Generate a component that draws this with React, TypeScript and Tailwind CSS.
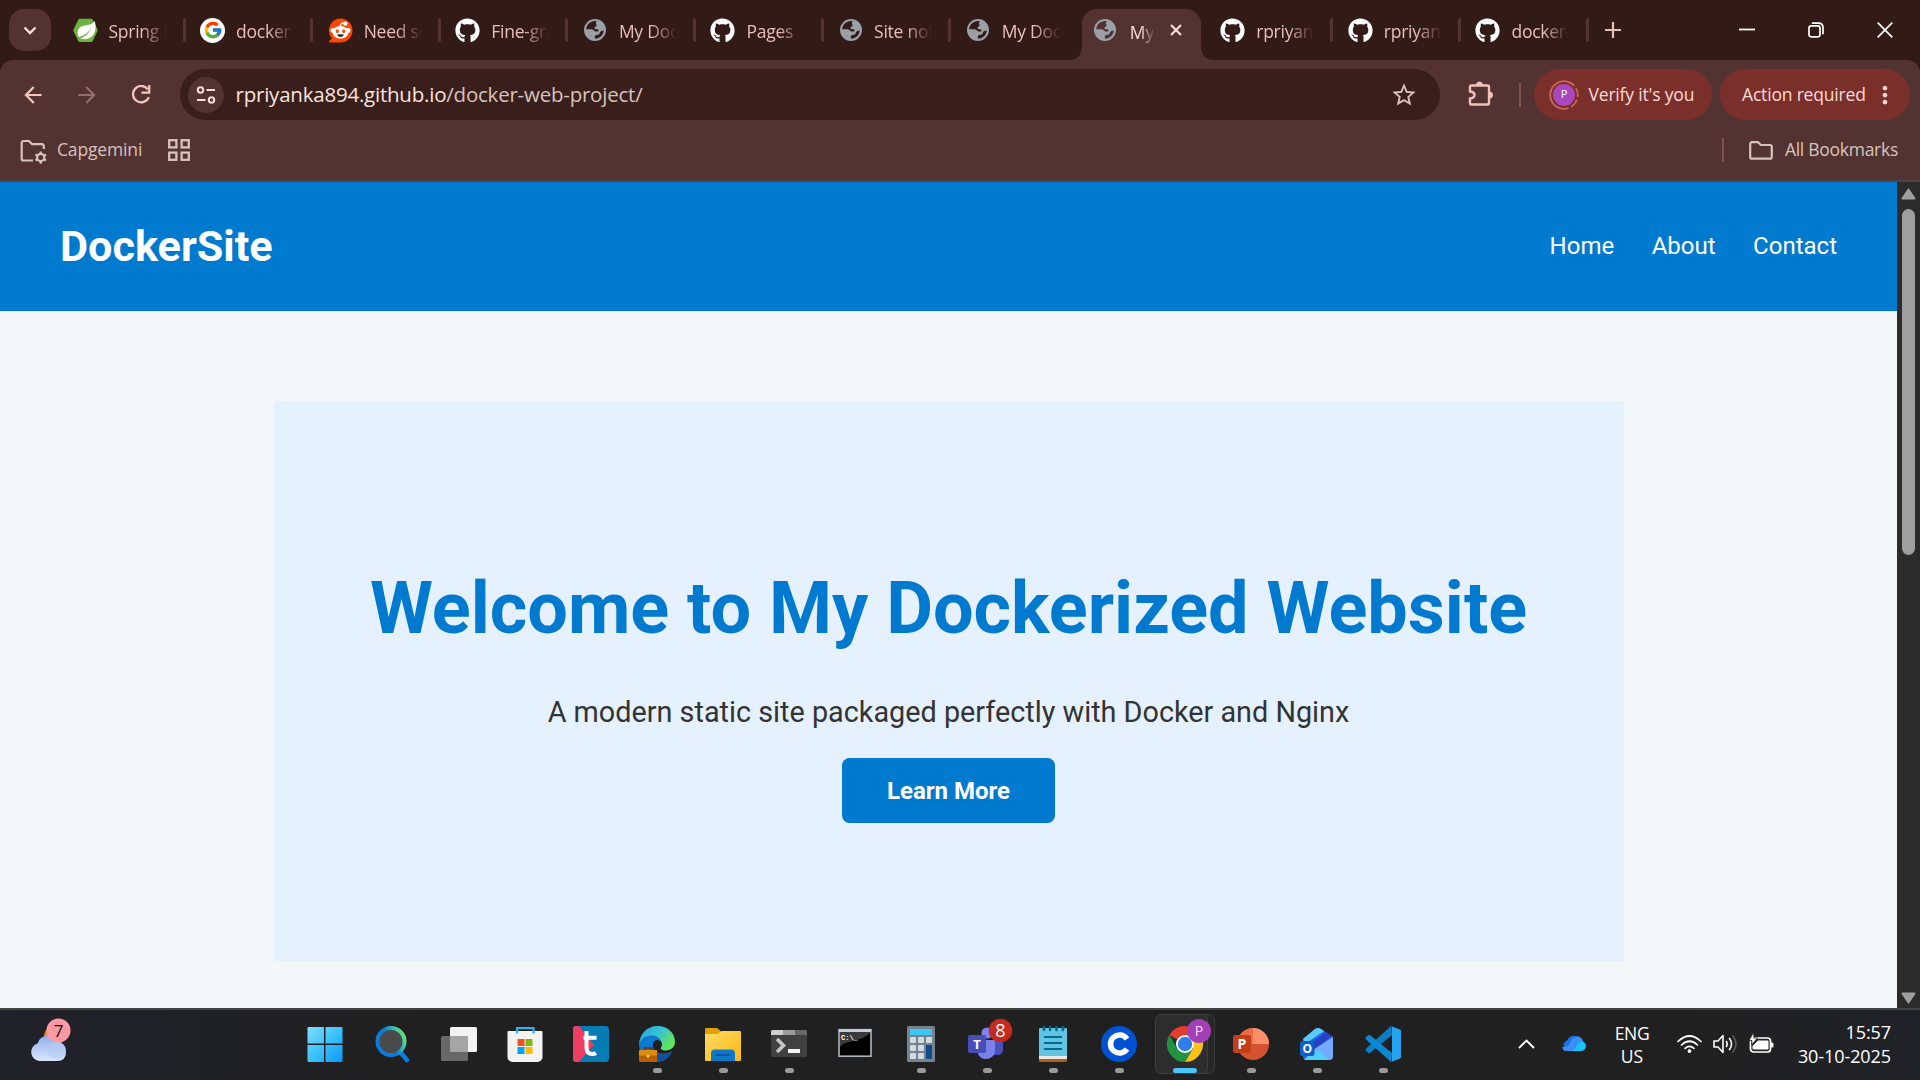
import React from "react";
import { FaGithub } from "react-icons/fa";
import { FcGoogle } from "react-icons/fc";
import {
  MdArrowBack,
  MdArrowForward,
  MdStarOutline,
  MdMoreVert,
} from "react-icons/md";

const UI = "font-['Open_Sans','Noto_Sans',sans-serif]";

function SpringIcon() {
  return (
    <svg width="25" height="25" viewBox="0 0 25 25">
      <path d="M7 0.8h11a2 2 0 0 1 1.700 1l4.600 9.200a3 3 0 0 1 0 2.600l-4.600 9.400a2 2 0 0 1-1.700 1H7a2 2 0 0 1-1.700-1L.7 13.600a3 3 0 0 1 0-2.600L5.300 1.800A2 2 0 0 1 7 .8z" fill="#6db33f" />
      <path d="M21.500 3c-1.500 3-4.500 3.600-9 4.200C7 8 4.300 11 4.600 15.500c.1 1.500.7 2.700 1.500 3.600 4.500-1.600 9-3.600 12-9.400-2 5.500-5.600 9-11 10.700 5.600 2 11.500.2 13.900-4.600C23 11.700 23.200 7 21.500 3z" fill="#fff" />
    </svg>
  );
}

function RedditIcon() {
  return (
    <svg width="25" height="25" viewBox="0 0 25 25">
      <path d="M12.500 .5a12 12 0 1 1 0 24H1.800c-.8 0-1.100-.9-.6-1.400L4 20.500A12 12 0 0 1 12.500 .5z" fill="#ff4500" />
      <path d="M12 8.500q.3-3.300 4-3.500" stroke="#fff" strokeWidth="1.300" fill="none" />
      <circle cx="17.300" cy="5.600" r="2.200" fill="#fff" />
      <circle cx="4.800" cy="12.400" r="2.300" fill="#fff" />
      <circle cx="20.200" cy="12.400" r="2.300" fill="#fff" />
      <ellipse cx="12.500" cy="14.300" rx="8" ry="6.300" fill="#fff" />
      <ellipse cx="9.300" cy="13.200" rx="1.500" ry="1.900" fill="#ff4500" />
      <ellipse cx="15.700" cy="13.200" rx="1.500" ry="1.900" fill="#ff4500" />
      <path d="M9 16.600q3.500-.9 7 0-.9 2.500-3.500 2.500T9 16.600z" fill="#1c2b30" />
    </svg>
  );
}

function GoogleIcon() {
  return (
    <span className="flex size-[25px] items-center justify-center rounded-full bg-white">
      <FcGoogle size={20} />
    </span>
  );
}

function GlobeIcon() {
  return (
    <svg width="22" height="22" viewBox="0 0 22 22">
      <path
        fillRule="evenodd"
        fill="#9aa0a6"
        d="M11 0a11 11 0 1 1 0 22 11 11 0 0 1 0-22zM2.200 10.200h5.300c1.700 0 2.700 1 3.600 2.300h2.600c.9 0 1.100-1.600.2-2.100-1-.4-3 .3-3.400-1.200-.4-1.400 1.900-1.300 2.100-2.600.2-1.400-1.200-2-.6-3.400.2-.5.500-.8.900-1.100A8.900 8.900 0 0 0 2.200 10.200zM19.800 11.600c-1.300.6-2.200 0-3.200.8-1.200 1-.5 2.300-2 3-1.200.5-2.800.2-3.500 1.200-.6.9-.3 2 .1 3.200 4.500-.1 8.100-3.500 8.600-8.200z"
      />
    </svg>
  );
}

const favicons: Record<string, React.ReactNode> = {
  spring: <SpringIcon />,
  google: <GoogleIcon />,
  reddit: <RedditIcon />,
  github: <FaGithub size={25} color="#fff" />,
  globe: <GlobeIcon />,
};

function Tab({ icon, title, last }: { icon: string; title: string; last?: boolean }) {
  return (
    <div className="flex h-full w-[127.6px] shrink-0 items-center">
      <span className="ml-[14.5px] flex w-[25px] shrink-0 justify-center">{favicons[icon]}</span>
      <span className="ml-[11px] w-[58px] overflow-hidden whitespace-nowrap text-[17.5px] leading-6 text-[#e8c0ba] [mask-image:linear-gradient(to_right,black_55%,transparent_100%)]">
        <span className="relative top-[1px] tracking-[-0.25px]">{title}</span>
      </span>
      <span className={last ? "hidden" : "ml-auto h-6 w-[3px] rounded-full bg-[#523331]"} />
    </div>
  );
}

function ActiveTab() {
  return (
    <div className="relative ml-[3px] mr-[5px] mt-[9px] flex h-[51px] w-[119px] shrink-0 self-start rounded-t-[15px] bg-[#523331]">
      <svg className="absolute -left-3 bottom-0" width="12" height="15" viewBox="0 0 12 15"><path d="M12 0v15H0Q12 14 12 0z" fill="#523331" /></svg>
      <svg className="absolute -right-3 bottom-0" width="12" height="15" viewBox="0 0 12 15"><path d="M0 0v15h12Q0 14 0 0z" fill="#523331" /></svg>
      <span className="ml-[12px] mt-[10px]"><GlobeIcon /></span>
      <span className="ml-[14px] mt-[11px] w-[23px] overflow-hidden whitespace-nowrap text-[17.5px] leading-6 text-[#f8ddd8] [mask-image:linear-gradient(to_right,black_45%,transparent_110%)]">My</span>
      <svg className="ml-[17px] mt-[15px]" width="12" height="12" viewBox="0 0 12 12"><path d="M1 1l10 10M11 1L1 11" stroke="#f8ddd8" strokeWidth="2.200" /></svg>
    </div>
  );
}

function TabStrip() {
  return (
    <div className="flex h-[60px] items-center bg-[#321a17]">
      <div className="ml-[9px] mr-[7px] flex size-[42px] shrink-0 items-center justify-center rounded-[15px] bg-[#523331]">
        <svg width="14" height="9" viewBox="0 0 14 9"><path d="M1.500 1.500L7 7l5.500-5.500" stroke="#f8ddd8" strokeWidth="2.400" fill="none" /></svg>
      </div>
      <Tab icon="spring" title="Spring I" />
      <Tab icon="google" title="docker" />
      <Tab icon="reddit" title="Need so" />
      <Tab icon="github" title="Fine-gra" />
      <Tab icon="globe" title="My Dock" />
      <Tab icon="github" title="Pages" />
      <Tab icon="globe" title="Site not" />
      <Tab icon="globe" title="My Dock" last />
      <ActiveTab />
      <Tab icon="github" title="rpriyank" />
      <Tab icon="github" title="rpriyank" />
      <Tab icon="github" title="docker-" />
      <svg className="ml-[16px] shrink-0" width="16" height="16" viewBox="0 0 16 16"><path d="M8 0v16M0 8h16" stroke="#e8c0ba" strokeWidth="2.200" /></svg>
      <div className="ml-auto flex shrink-0 items-center pr-[27px]">
        <svg width="16" height="16" viewBox="0 0 16 16"><path d="M0 7.500h16" stroke="#fff" strokeWidth="1.800" /></svg>
        <svg className="ml-[53px]" width="16" height="16" viewBox="0 0 16 16" fill="none" stroke="#fff" strokeWidth="1.700"><rect x="1" y="3.800" width="11" height="11" rx="2.200" /><path d="M3.800 1.200H11a4 4 0 0 1 4 4v7" /></svg>
        <svg className="ml-[53px]" width="16" height="16" viewBox="0 0 16 16"><path d="M.7.7l14.600 14.600M15.300.7L.7 15.300" stroke="#fff" strokeWidth="1.700" /></svg>
      </div>
    </div>
  );
}

function Toolbar() {
  return (
    <div className="bg-[#321a17]">
      <div className="flex h-[69px] items-center rounded-t-[13px] bg-[#523331] text-[#f3c4bd]">
        <MdArrowBack className="ml-[20px] shrink-0" size={26} color="#f5c5be" />
        <MdArrowForward className="ml-[28px] shrink-0" size={26} color="#92706d" />
        <svg className="ml-[31px] shrink-0" width="20" height="20" viewBox="0 0 20 20" fill="none" stroke="#f5c5be" strokeWidth="2.300">
          <path d="M16.800 4.200A8.200 8.200 0 1 0 17.900 12.200" />
          <path d="M18.200 0v7.700h-7.700" />
        </svg>
        <div className="ml-[29px] flex h-[51px] w-[1260px] shrink-0 items-center rounded-full bg-[#3a1e1b]">
          <span className="ml-[7.5px] flex size-9 items-center justify-center rounded-full bg-[#523331]">
            <svg width="20" height="20" viewBox="0 0 20 20" fill="none" stroke="#f8ddd8" strokeWidth="2"><circle cx="4.500" cy="5" r="2.700" /><path d="M10.500 5H19M1 15h8.500" /><circle cx="15.500" cy="15" r="2.700" /></svg>
          </span>
          <span className="ml-[12px] whitespace-nowrap pb-[1px] text-[20.5px] leading-7 tracking-[-0.22px] text-[#d8c2be]"><span className="text-[#fbe3df]">rpriyanka894.github.io</span>/docker-web-project/</span>
          <MdStarOutline className="ml-auto mr-[22px]" size={28} color="#d8c2be" />
        </div>
        <svg className="mb-[3px] ml-[28px] shrink-0" width="27" height="27" viewBox="0 0 27 27">
          <path d="M3.500 5.500h16a1.500 1.500 0 0 1 1.500 1.500v16a1.500 1.500 0 0 1-1.500 1.500h-16A1.500 1.500 0 0 1 2 23v-4.500q4.500-.5 4.500-3.500T2 11.500V7a1.500 1.500 0 0 1 1.500-1.500z" fill="none" stroke="#f0c2bc" strokeWidth="2.400" />
          <path d="M8.500 5a3 3 0 0 1 6 0zM21.500 12a3.100 3.100 0 0 1 0 6.200z" fill="#f0c2bc" stroke="#f0c2bc" />
        </svg>
        <span className="ml-[24px] h-6 w-[2px] bg-[#7b5350]" />
        <div className="ml-[13px] flex h-[51px] w-[178px] shrink-0 items-center rounded-full bg-[#7a2f2b]">
          <span className="relative ml-[15px] flex size-[30px] items-center justify-center">
            <svg className="absolute inset-0" width="30" height="30" viewBox="0 0 30 30"><circle cx="15" cy="15" r="13.800" fill="none" stroke="#c9685e" strokeWidth="1.800" strokeDasharray="9 3 9 3 9 3 51 0" transform="rotate(-80 15 15)" /></svg>
            <span className="flex size-[22px] items-center justify-center rounded-full bg-[#ab47bc] text-[11px] text-white">P</span>
          </span>
          <span className="ml-[9.5px] whitespace-nowrap text-[17.5px] tracking-[-0.18px] text-[#ffdad5]">Verify it's you</span>
        </div>
        <div className="ml-[8px] flex h-[51px] w-[190px] shrink-0 items-center rounded-full bg-[#7a2f2b]">
          <span className="ml-[22px] whitespace-nowrap text-[17.5px] tracking-[-0.18px] text-[#ffdad5]">Action required</span>
          <MdMoreVert className="ml-auto mr-[11px]" size={28} color="#ffdad5" />
        </div>
      </div>
    </div>
  );
}

function BookmarksBar() {
  return (
    <div className="flex h-[53px] items-center border-b-2 border-[#50423f] bg-[#523331] pb-[9px] text-[17.5px] text-[#d8c2be]">
      <svg className="ml-[20px] mt-[3px]" width="28" height="26" viewBox="0 0 28 26" fill="none" stroke="#d8c2be" strokeWidth="2.200">
        <path d="M13 21.500H3.500a1.800 1.800 0 0 1-1.800-1.800V3.800A1.800 1.800 0 0 1 3.500 2H9l3 3.200h10a1.800 1.800 0 0 1 1.800 1.800v3" />
        <circle cx="20.700" cy="18.500" r="3.600" />
        <path d="M20.700 12.500v2.500M20.700 22v2.700M15.500 15.500l2 1.200M24 20.300l2 1.200M15.500 21.500l2-1.200M24 16.700l2-1.200" />
      </svg>
      <span className="ml-[9px] whitespace-nowrap pb-[1px] tracking-[-0.15px]">Capgemini</span>
      <svg className="ml-[26px]" width="22" height="22" viewBox="0 0 22 22" fill="none" stroke="#d8c2be" strokeWidth="2.300">
        <rect x="1.200" y="1.200" width="7.200" height="7.200" /><rect x="13.600" y="1.200" width="7.200" height="7.200" />
        <rect x="1.200" y="13.600" width="7.200" height="7.200" /><rect x="13.600" y="13.600" width="7.200" height="7.200" />
      </svg>
      <span className="ml-auto h-6 w-[2px] bg-[#7b5350]" />
      <svg className="ml-[25px]" width="24" height="19" viewBox="0 0 24 19" fill="none" stroke="#d8c2be" strokeWidth="2.200"><path d="M3 1.200h6l2.800 2.800H21A1.800 1.800 0 0 1 22.800 5.800v10A1.800 1.800 0 0 1 21 17.700H3a1.800 1.800 0 0 1-1.800-1.800V3A1.800 1.800 0 0 1 3 1.200z" /></svg>
      <span className="ml-[12px] mr-[22px] whitespace-nowrap pb-[1px] tracking-[-0.27px]">All Bookmarks</span>
    </div>
  );
}

function Website() {
  return (
    <div className="flex h-[826px] overflow-hidden">
      <main className="w-[1897px] shrink-0 bg-[#f3f7f8] font-['Roboto',sans-serif]">
        <header className="flex h-[129px] items-center justify-between bg-[#007acf] px-[60px] text-white">
          <h1 className="pt-[1px] text-[43.2px] font-bold">DockerSite</h1>
          <nav className="flex gap-[37.500px] pb-[2px] text-[24px]">
            <a>Home</a><a>About</a><a>Contact</a>
          </nav>
        </header>
        <section className="mx-auto mt-[90px] flex h-[560px] w-[1350px] flex-col items-center bg-[#e5f1ff]">
          <h2 className="mt-[160px] whitespace-nowrap text-[72px] font-bold leading-[96px] text-[#007acf]">Welcome to My Dockerized Website</h2>
          <p className="mt-[36px] whitespace-nowrap text-[28.8px] leading-[38px] text-[#333]">A modern static site packaged perfectly with Docker and Nginx</p>
          <a className="mt-[27px] flex h-[65px] w-[213px] items-center justify-center rounded-[7.500px] bg-[#007acf] text-[24px] font-bold text-white">Learn More</a>
        </section>
      </main>
      <div className="flex w-[23px] flex-col items-center bg-[#2b2b2b]">
        <svg className="mt-[6px]" width="15" height="12" viewBox="0 0 15 12"><path d="M7.500 1.500L13.500 10.500H1.500z" fill="#9f9f9f" stroke="#9f9f9f" strokeWidth="2" strokeLinejoin="round" /></svg>
        <span className="mt-[9px] h-[346px] w-[13px] rounded-full bg-[#9f9f9f]" />
        <svg className="mb-[4px] mt-auto" width="15" height="12" viewBox="0 0 15 12"><path d="M7.500 10.500L13.500 1.500H1.500z" fill="#9f9f9f" stroke="#9f9f9f" strokeWidth="2" strokeLinejoin="round" /></svg>
      </div>
    </div>
  );
}

function App36({ children }: { children: React.ReactNode }) {
  return <svg className="overflow-visible" width="36" height="36" viewBox="0 0 36 36">{children}</svg>;
}

function WindowsIcon() {
  return (
    <App36>
      <defs><linearGradient id="win" gradientUnits="userSpaceOnUse" x1="0" y1="0" x2="36" y2="36"><stop offset="0" stopColor="#84dcff" /><stop offset=".5" stopColor="#3cc4fb" /><stop offset="1" stopColor="#0c94f8" /></linearGradient></defs>
      <path d="M1.500 1H17v16.500H.5V2a1 1 0 0 1 1-1zM18.500 1H34.500a1 1 0 0 1 1 1v15.500h-17zM.5 19H17v17H1.500a1 1 0 0 1-1-1zM18.500 19h17v16a1 1 0 0 1-1 1h-16z" fill="url(#win)" />
    </App36>
  );
}

function SearchIcon() {
  return (
    <App36>
      <defs><linearGradient id="srch" x1="0" y1=".7" x2="1" y2=".2"><stop offset=".45" stopColor="#0a7bdc" /><stop offset=".8" stopColor="#3ec6a8" /><stop offset="1" stopColor="#6ee66c" /></linearGradient></defs>
      <path d="M25 26l7 8" stroke="#0a7bdc" strokeWidth="4.500" strokeLinecap="round" />
      <circle cx="16" cy="15.500" r="13.500" fill="#4a4a4a" stroke="url(#srch)" strokeWidth="4" />
    </App36>
  );
}

function TaskViewIcon() {
  return (
    <App36>
      <rect x="9" y="1" width="27" height="25" rx="1.500" fill="#f2f2f2" />
      <rect x="0" y="10" width="27" height="25" rx="1.500" fill="#686868" />
      <path d="M9 10h18v16H9z" fill="#a5a5a5" />
    </App36>
  );
}

function StoreIcon() {
  return (
    <App36>
      <path d="M10 8V2.200h16.500V8" fill="none" stroke="#2cb3ee" strokeWidth="2.200" />
      <path d="M1.500 5h33a1 1 0 0 1 1 1v25a5 5 0 0 1-5 5h-25a5 5 0 0 1-5-5V6a1 1 0 0 1 1-1z" fill="#f3f3f3" />
      <path d="M10 7.500V5M26.500 7.500V5" stroke="#2cb3ee" strokeWidth="2.200" />
      <path d="M10.500 13h7v7h-7z" fill="#f25022" /><path d="M18.500 13h7v7h-7z" fill="#7fba00" />
      <path d="M10.500 21h7v7h-7z" fill="#00a4ef" /><path d="M18.500 21h7v7h-7z" fill="#ffb900" />
    </App36>
  );
}

function TIcon() {
  return (
    <App36>
      <rect width="36" height="36" rx="3.500" fill="#067cb4" />
      <path d="M3 0h3l15 19L6 36H3a3 3 0 0 1-3-3V3a3 3 0 0 1 3-3z" fill="#ee3f63" />
      <path d="M13.500 5v16.500q0 6.500 6 6.500 2 0 3.500-1M10.500 11.700h13" fill="none" stroke="#fff" strokeWidth="4" />
    </App36>
  );
}

function EdgeIcon() {
  return (
    <App36>
      <defs><linearGradient id="edg" x1="0" y1="0" x2="1" y2=".6"><stop offset="0" stopColor="#1da5dc" /><stop offset=".5" stopColor="#35c1d8" /><stop offset="1" stopColor="#66e65a" /></linearGradient></defs>
      <path d="M0 18.500C.5 8 8 0 18.500 0 29 0 36 7.500 36 15.500 36 21 32 24.500 27 24.500c-4 0-6.500-2-5-4 2-3-1-8-7-8-7 0-13 3-15 6z" fill="url(#edg)" />
      <path d="M0 18.500C2 11 9 9 14 9.500c5 .5 8 4 8 7-2-2-7-2-8 2-.8 5 3 8.500 8 9 4 .4 7.500-.2 11-2-3 6.500-9 10.500-15 10.500C8 36 0 28 0 18.500z" fill="#0f78d0" />
      <path d="M14 19c-1 7 6 12 19 7-3 6.500-9 10-15 10-5-4-6-10-4-17z" fill="#124f9c" />
      <circle cx="18.500" cy="18.500" r="4.500" fill="#202020" />
      <rect x="0" y="24" width="18" height="12" rx="1" fill="#b66203" /><path d="M0 24h18v5.500H0z" fill="#e08a12" />
      <path d="M6 24v-2h6v2" fill="none" stroke="#6b3600" strokeWidth="1.500" /><circle cx="9" cy="30" r="1.500" fill="#ffd54a" />
    </App36>
  );
}

function FolderIcon() {
  return (
    <App36>
      <defs><linearGradient id="fld" x1="0" y1="0" x2="1" y2="1"><stop offset="0" stopColor="#ffdb68" /><stop offset="1" stopColor="#fdb80e" /></linearGradient></defs>
      <path d="M1 2h10q1.500 0 2.500 1l2 2v3H0V3a1 1 0 0 1 1-1z" fill="#e2a003" />
      <path d="M0 8h11q2 0 3.500-1.500L16 5h19a1 1 0 0 1 1 1v28a1 1 0 0 1-1 1H1a1 1 0 0 1-1-1z" fill="url(#fld)" />
      <path d="M6 35v-7.500a4 4 0 0 1 4-4h16a4 4 0 0 1 4 4V35z" fill="#0f78c9" />
      <path d="M11 29h14" stroke="#0a4f94" strokeWidth="1.600" strokeLinecap="round" />
    </App36>
  );
}

function TerminalIcon() {
  return (
    <App36>
      <rect y="4" width="36" height="27" rx="1.500" fill="#404040" />
      <path d="M1.500 4H12v5H0V5.500A1.500 1.500 0 0 1 1.500 4z" fill="#cfcfcf" /><path d="M12 4h12v5H12z" fill="#9c9c9c" /><path d="M24 4h10.500A1.500 1.500 0 0 1 36 5.500V9H24z" fill="#686868" />
      <path d="M6 13l6.500 6.500L6 26" fill="none" stroke="#c4c4c4" strokeWidth="3.600" />
      <path d="M17 23h12v4H17z" fill="#f2f2f2" />
    </App36>
  );
}

function CmdIcon() {
  return (
    <App36>
      <rect x="2" y="3.700" width="32" height="26.500" fill="#000" stroke="#aeb6bd" strokeWidth="1.600" />
      <path d="M2 3h32v3H2z" fill="#c7ced5" />
      <path d="M3 6h30v1q-6 6-17 8T3 21z" fill="#3a3a3a" />
      <text x="4" y="14" fontSize="7" fill="#fff" fontFamily="Liberation Mono" fontWeight="bold">C:\_</text>
    </App36>
  );
}

const calcKeys = [[7, 11], [15, 11], [23, 11], [7, 19], [15, 19], [7, 27], [15, 27]];

function CalculatorIcon() {
  return (
    <App36>
      <rect x="4" width="28" height="36" rx="1.500" fill="#77838c" />
      <rect x="7" y="3" width="22" height="6" fill="#3cc6f5" />
      {calcKeys.map(([x, y]) => <rect key={`${x}-${y}`} x={x} y={y} width="6" height="6" rx="1" fill="#d3dae2" />)}
      <rect x="23" y="19" width="6" height="14" rx="1" fill="#114a8b" />
    </App36>
  );
}

function TeamsIcon() {
  return (
    <App36>
      <circle cx="18" cy="7" r="5.500" fill="#7b83eb" />
      <path d="M24 14h8a2 2 0 0 1 2 2v7q0 6-6 6h-4z" fill="#4a50bd" />
      <path d="M9 14h15a2 2 0 0 1 2 2v9a9 9 0 0 1-17 3z" fill="#7b83eb" />
      <rect x="-1" y="9" width="18" height="18" rx="1.800" fill="#464eb8" />
      <text x="8" y="22.500" fontSize="13" fontWeight="bold" fill="#fff" textAnchor="middle" fontFamily="Open Sans">T</text>
      <circle cx="31.500" cy="4.500" r="11.700" fill="#c42b1c" />
      <text x="31.500" y="11" fontSize="18" fill="#fff" textAnchor="middle" fontFamily="Open Sans">8</text>
    </App36>
  );
}

function NotepadIcon() {
  return (
    <App36>
      <path d="M4 30h28v4.500a1.500 1.500 0 0 1-1.500 1.500h-25A1.500 1.500 0 0 1 4 34.500z" fill="#b35c13" />
      <path d="M4 28h28v5H4z" fill="#e9e9e9" />
      <rect x="4" y="2" width="28" height="28" rx="1" fill="#60c5e3" />
      <path d="M9 11h18M9 17h18M9 23h18" stroke="#05688c" strokeWidth="2" />
      <path d="M9 1v3M15 1v3M21.500 1v3M28 1v3" stroke="#05688c" strokeWidth="2.600" strokeLinecap="round" />
    </App36>
  );
}

function CIcon() {
  return (
    <App36>
      <circle cx="18" cy="18" r="18" fill="#0052d4" />
      <path d="M26 13a9 9 0 1 0 0 10" fill="none" stroke="#fff" strokeWidth="5.500" />
    </App36>
  );
}

function ChromeIcon() {
  return (
    <App36>
      <path d="M18 18L2.400 9A18 18 0 0 1 33.600 9H18z" fill="#e33b2e" />
      <path d="M33.600 9A18 18 0 0 1 18 36l7.800-13.500L18 9z" fill="#fbc116" />
      <path d="M2.400 9A18 18 0 0 0 18 36l7.800-13.500-15.600 0z" fill="#229342" />
      <circle cx="18" cy="18" r="9" fill="#fff" /><circle cx="18" cy="18" r="7.200" fill="#2f7de9" />
      <circle cx="32" cy="5" r="12" fill="#a33fb5" />
      <text x="32" y="10" fontSize="14" fill="#f6ddf8" textAnchor="middle" fontFamily="Open Sans">P</text>
    </App36>
  );
}

function PowerPointIcon() {
  return (
    <App36>
      <circle cx="20" cy="18" r="16" fill="#d35230" />
      <path d="M20 2a16 16 0 0 1 16 16H20z" fill="#ff8f6b" /><path d="M4 18A16 16 0 0 1 20 2v16z" fill="#ed6c47" />
      <rect y="9" width="18" height="18" rx="1.800" fill="#c43e1c" />
      <text x="9" y="22.800" fontSize="14" fontWeight="bold" fill="#fff" textAnchor="middle" fontFamily="Open Sans">P</text>
    </App36>
  );
}

function OutlookIcon() {
  return (
    <App36>
      <path d="M4 13L16 3q3-2 6 0l12 8v19a4 4 0 0 1-4 4H8a4 4 0 0 1-4-4z" fill="#1a6fe0" />
      <path d="M4 13L16 3q3-2 6 0l3 2L6 18z" fill="#5ec8ff" />
      <path d="M9 19L27 6l6 4-18 13z" fill="#2b3fc4" />
      <path d="M34 11v19a4 4 0 0 1-4 4H22L14 24z" fill="#76a9ff" />
      <path d="M5 34q10-12 16-9l9 9z" fill="#4fd0ff" />
      <rect x="1" y="15" width="14.500" height="15" rx="2.500" fill="#0f5fc4" />
      <text x="8.200" y="27" fontSize="12" fontWeight="bold" fill="#fff" textAnchor="middle" fontFamily="Open Sans">O</text>
    </App36>
  );
}

function VsCodeIcon() {
  return (
    <App36>
      <path d="M26 0L1 22.500a1.500 1.500 0 0 0 0 2.200l2 2a1.600 1.600 0 0 0 2.200 0L27 9z" fill="#0f7cc0" />
      <path d="M26 36L1 13.500a1.500 1.500 0 0 1 0-2.200l2-2a1.600 1.600 0 0 1 2.200 0L27 27z" fill="#0a89d3" />
      <path d="M26 0l9 3.500a1.500 1.500 0 0 1 1 1.500v26a1.500 1.500 0 0 1-1 1.500L26 36q1-.5 1-2V2q0-1.500-1-2z" fill="#26a3ee" />
    </App36>
  );
}

type Item = { name: string; icon: React.ReactNode; state?: "open" | "active" };

const items: Item[] = [
  { name: "search", icon: <SearchIcon /> },
  { name: "taskview", icon: <TaskViewIcon /> },
  { name: "store", icon: <StoreIcon /> },
  { name: "t", icon: <TIcon /> },
  { name: "edge", icon: <EdgeIcon />, state: "open" },
  { name: "explorer", icon: <FolderIcon />, state: "open" },
  { name: "terminal", icon: <TerminalIcon />, state: "open" },
  { name: "cmd", icon: <CmdIcon /> },
  { name: "calculator", icon: <CalculatorIcon />, state: "open" },
  { name: "teams", icon: <TeamsIcon />, state: "open" },
  { name: "notepad", icon: <NotepadIcon />, state: "open" },
  { name: "c", icon: <CIcon />, state: "open" },
  { name: "chrome", icon: <ChromeIcon />, state: "active" },
  { name: "powerpoint", icon: <PowerPointIcon />, state: "open" },
  { name: "outlook", icon: <OutlookIcon />, state: "open" },
  { name: "vscode", icon: <VsCodeIcon />, state: "open" },
];

function TaskbarItem({ item }: { item: Item }) {
  const active = item.state === "active";
  return (
    <div className="relative flex w-[66px] flex-col items-center pt-[16px]">
      {active && (
        <>
          <span className="absolute left-[8px] top-[4px] h-[60px] w-[55px] rounded-[6px] border border-[#3a3a3a] bg-[#272727]" />
          <span className="absolute left-[3px] top-[4px] h-[60px] w-[53px] rounded-[6px] border border-[#3f3f3f] bg-[#2d2d2d]" />
        </>
      )}
      <span className="relative h-9">{item.icon}</span>
      {item.state === "open" && <span className="mt-[6px] h-[5px] w-[9px] rounded-full bg-[#9a9a9a]" />}
      {active && <span className="relative mt-[6px] h-[5px] w-[24px] rounded-full bg-[#4cc2ff]" />}
    </div>
  );
}

function Taskbar() {
  return (
    <div className="flex h-[72px] border-t-2 border-[#434343] bg-[linear-gradient(to_right,#21222a,#202020_22%,#202020_88%,#202228)] text-white">
      <div className="w-[292px] shrink-0">
        <svg className="ml-[27px] mt-[4px]" width="46" height="52" viewBox="0 0 46 52">
          <defs><linearGradient id="cld" x1="0" y1="0" x2="0" y2="1"><stop offset="0" stopColor="#8fb0ee" /><stop offset="1" stopColor="#dbe6fa" /></linearGradient></defs>
          <circle cx="27" cy="22" r="10" fill="#f58a1f" />
          <path d="M12 47a9 9 0 0 1-1.500-17.500A11 11 0 0 1 31 28a9 9 0 0 1 8 10q0 9-9 9z" fill="url(#cld)" />
          <circle cx="29.500" cy="36" r="9" fill="#b7cbf3" fillOpacity=".55" />
          <circle cx="31.500" cy="16.500" r="12" fill="#ff99a4" />
          <text x="31.500" y="22.500" fontSize="17" fill="#111" textAnchor="middle" fontFamily="Open Sans">7</text>
        </svg>
      </div>
      <div className="flex shrink-0">
        <div className="mr-[2px] flex w-[66px] justify-center pt-[16px]"><WindowsIcon /></div>
        {items.map((i) => <TaskbarItem key={i.name} item={i} />)}
      </div>
      <div className="ml-auto flex items-center pr-[29px] text-[18px] leading-6">
        <svg className="mb-[3px]" width="17" height="10" viewBox="0 0 17 10"><path d="M1 9l7.500-7.500L16 9" fill="none" stroke="#fff" strokeWidth="1.900" /></svg>
        <svg className="mb-[4px] ml-[27px]" width="25" height="17" viewBox="0 0 25 17">
          <path d="M6 16a5.500 5.500 0 0 1-1-10.500A8.500 8.500 0 0 1 20 5l-8 11z" fill="#1a72ea" />
          <path d="M4 16q-3 0-4-4 6 1 8-4Q11 1 17 1.800q4 1.500 4 5Q14 6 11 16z" fill="#3d8ff5" />
          <path d="M8 16q5-1 6-5 3-5 7-4.500a5 5 0 0 1-1.500 9.500z" fill="#14c4fb" />
        </svg>
        <div className="ml-[24px] flex w-[42px] flex-col items-center pb-[1px] text-[17.5px] leading-[23px]"><span className="tracking-[-0.4px]">ENG</span><span>US</span></div>
        <svg className="mb-[2px] ml-[24px]" width="25" height="18" viewBox="0 0 25 18" fill="none" stroke="#fff" strokeWidth="1.700" strokeLinecap="round"><path d="M1 6.500Q12.500-4.500 24 6.500M4.500 10Q12.500 2.500 20.500 10M8 13.300Q12.500 9.300 17 13.300" /><circle cx="12.500" cy="16" r="1.500" fill="#fff" stroke="none" /><circle cx="12.500" cy="16" r="1" /></svg>
        <svg className="mb-[2px] ml-[11px]" width="25" height="20" viewBox="0 0 25 20" fill="none" stroke="#fff" strokeWidth="1.600" strokeLinecap="round" strokeLinejoin="round"><path d="M1 7h4l5-5.500v17L5 13H1zM13.500 7.500q1.500 2.500 0 5M16.500 4.500q4 5.500 0 11" /><path d="M20 2q6 8 0 16" stroke="#5a5a5a" /></svg>
        <svg className="mb-[4px] ml-[11px]" width="26" height="20" viewBox="0 0 26 20"><rect x="1.500" y="5" width="20" height="14" rx="3" fill="none" stroke="#fff" strokeWidth="1.700" /><path d="M9 7.500h9.500A1 1 0 0 1 19.500 8.500v7a1 1 0 0 1-1 1h-14a1 1 0 0 1-1-1v-2.500z" fill="#fff" /><path d="M22 9.500h1a1.500 1.500 0 0 1 1.500 1.500v2A1.500 1.500 0 0 1 23 14.500h-1z" fill="#fff" /><path d="M4.500-.5L0 7.500h3L2.500 12 8.500 5H5z" fill="#fff" stroke="#202020" strokeWidth=".8" /></svg>
        <div className="ml-[22px] flex w-[94px] flex-col items-end whitespace-nowrap pb-[2px] leading-6 tracking-[-0.08px]"><span>15:57</span><span>30-10-2025</span></div>
      </div>
    </div>
  );
}

export default function App() {
  return (
    <div className={`flex h-[1080px] w-[1920px] flex-col overflow-hidden ${UI}`}>
      <TabStrip />
      <Toolbar />
      <BookmarksBar />
      <Website />
      <Taskbar />
    </div>
  );
}
